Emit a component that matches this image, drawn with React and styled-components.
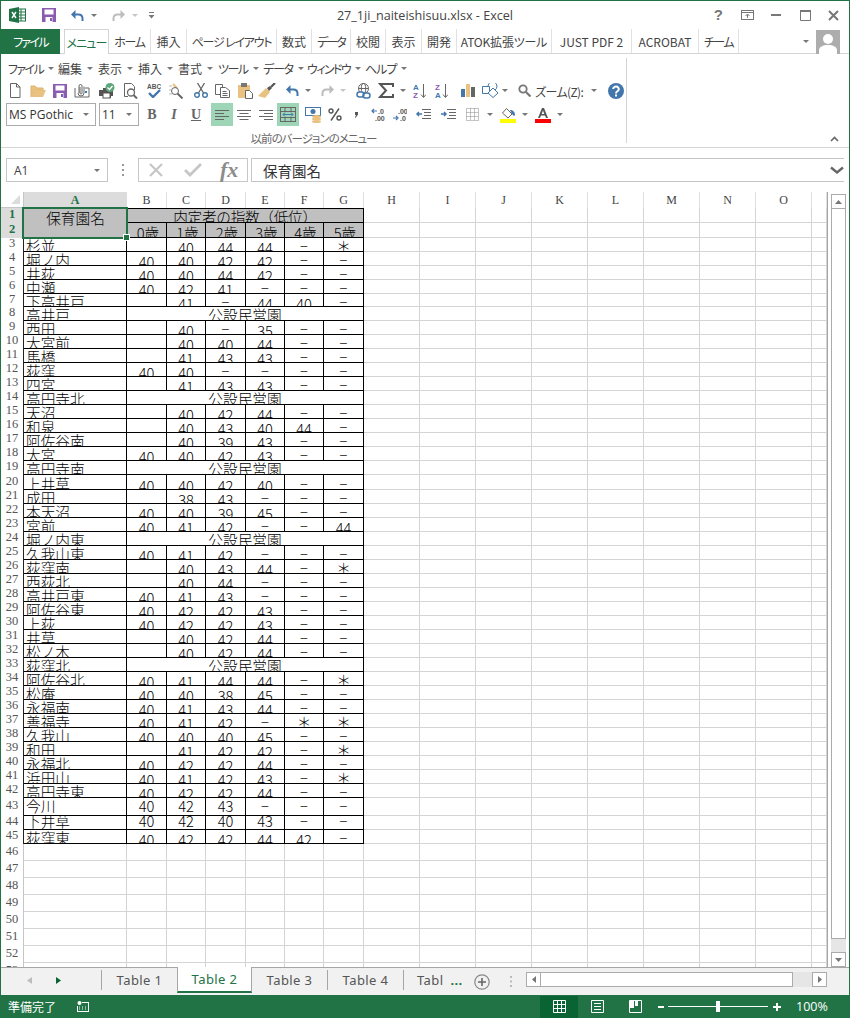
import styled, { createGlobalStyle } from "styled-components";

const GREEN = "#217346";
const JP = `"Noto Sans CJK JP", sans-serif`;

const GlobalStyle = createGlobalStyle`
  html, body { margin: 0; padding: 0; background: #fff; }
  svg { display: block; flex: none; }
`;

const Window = styled.div`
  width: 850px;
  height: 1018px;
  box-sizing: border-box;
  border: 1px solid ${GREEN};
  border-bottom: 0;
  display: flex;
  flex-direction: column;
  overflow: hidden;
  background: #fff;
  font-family: ${JP};
  font-feature-settings: "palt";
  color: #444;
`;

/* title bar */
const TitleBar = styled.div`
  height: 28px;
  flex: none;
  display: grid;
  grid-template-columns: 1fr auto 1fr;
  align-items: center;
`;
const Qat = styled.div`
  display: flex;
  align-items: center;
`;
const Title = styled.div`
  font-family: "Open Sans", sans-serif;
  font-size: 12.6px;
  color: #444;
`;
const WinControls = styled.div`
  display: flex;
  justify-content: flex-end;
  align-items: center;
  padding-right: 10px;
`;
const Help = styled.span`
  font-family: "Liberation Sans", sans-serif;
  font-weight: 700;
  font-size: 15px;
  color: #777;
  line-height: 16px;
  margin-right: 18px;
`;
const Slot = styled.div`
  width: ${(p) => p.$w}px;
  margin-left: ${(p) => p.$ml || 0}px;
  flex: none;
  display: flex;
  align-items: center;
  justify-content: center;
`;

/* ribbon tabs */
const TabRow = styled.div`
  height: 25px;
  flex: none;
  box-sizing: border-box;
  display: flex;
  align-items: stretch;
  border-bottom: 1px solid #d4d4d4;
  position: relative;
`;
const FileTab = styled.div`
  width: 59px;
  margin-right: 4px;
  background: ${GREEN};
  color: #fff;
  font-size: 12px;
  letter-spacing: -1.7px;
  display: flex;
  align-items: center;
  justify-content: center;
  margin-bottom: -1px;
`;
const RibbonTab = styled.div`
  width: ${(p) => p.$w}px;
  flex: none;
  box-sizing: border-box;
  font-size: 12px;
  letter-spacing: ${(p) => p.$ls || 0}px;
  display: flex;
  align-items: center;
  justify-content: center;
  white-space: nowrap;
  color: ${(p) => (p.$active ? GREEN : "#444")};
  border-right: 1px solid #e1e1e1;
  ${(p) =>
    p.$active &&
    `
    background: #fff;
    border: 1px solid #d4d4d4;
    border-bottom: 0;
    margin-bottom: -1px;
    position: relative;
  `}
`;
const TabTail = styled.div`
  flex: 1;
  display: flex;
  justify-content: flex-end;
  align-items: center;
  padding-right: 9px;
  gap: 7px;
  margin-bottom: -1px;
`;
const Avatar = styled.div`
  width: 24px;
  height: 24px;
  background: #adadad;
  overflow: hidden;
`;

/* ribbon body */
const Ribbon = styled.div`
  height: 94px;
  flex: none;
  box-sizing: border-box;
  border-bottom: 1px solid #d4d4d4;
  display: flex;
`;
const RibbonGroup = styled.div`
  width: 626px;
  margin: 4px 0 4px;
  box-sizing: border-box;
  border-right: 1px solid #d4d4d4;
  display: flex;
  flex-direction: column;
`;
const MenuRow = styled.div`
  height: 19px;
  margin-top: 1px;
  display: flex;
  align-items: center;
  padding-left: 7px;
`;
const MenuItem = styled.div`
  width: ${(p) => p.$w}px;
  flex: none;
  display: flex;
  align-items: center;
  font-size: 12px;
  color: #444;
  white-space: nowrap;
`;
const MenuText = styled.span`
  letter-spacing: ${(p) => p.$ls || 0}px;
  margin-right: 5px;
`;
const ToolRow = styled.div`
  height: ${(p) => p.$h}px;
  flex: none;
  display: flex;
  align-items: center;
`;
const Caret = styled.span`
  display: block;
  flex: none;
  width: 0;
  height: 0;
  margin-left: ${(p) => p.$ml || 0}px;
  border-left: 3px solid transparent;
  border-right: 3px solid transparent;
  border-top: 3px solid ${(p) => p.$color || "#777"};
`;
const Select = styled.div`
  width: ${(p) => p.$w}px;
  height: 23px;
  margin-left: ${(p) => p.$ml}px;
  flex: none;
  box-sizing: border-box;
  border: 1px solid #ababab;
  display: flex;
  align-items: center;
  justify-content: space-between;
  padding: 0 6px 0 2px;
  font-family: "Open Sans", sans-serif;
  font-size: 12px;
  color: #333;
`;
const StyleBtn = styled.div`
  width: ${(p) => p.$w}px;
  margin-left: ${(p) => p.$ml || 0}px;
  flex: none;
  text-align: center;
  font-family: "Liberation Serif", serif;
  font-size: 14px;
  font-weight: 700;
  color: #666;
  font-style: ${(p) => (p.$italic ? "italic" : "normal")};
  text-decoration: ${(p) => (p.$under ? "underline" : "none")};
`;
const HiBtn = styled.div`
  width: 22px;
  height: 23px;
  margin-left: ${(p) => p.$ml || 0}px;
  flex: none;
  background: ${(p) => (p.$on ? "#9fd5b7" : "transparent")};
  display: flex;
  align-items: center;
  justify-content: center;
`;
const ZoomLabel = styled.span`
  font-size: 12px;
  color: #444;
  margin-left: 4px;
  padding-top: 2px;
  width: 54px;
  flex: none;
  letter-spacing: -0.6px;
  white-space: nowrap;
`;
const GroupLabel = styled.div`
  margin-top: auto;
  height: 16px;
  line-height: 16px;
  text-align: center;
  font-size: 11.5px;
  letter-spacing: -1px;
  color: #666;
  margin-bottom: -3px;
`;
const Collapse = styled.div`
  flex: 1;
  display: flex;
  justify-content: flex-end;
  align-items: flex-end;
  padding: 0 10px 5px 0;
`;

/* formula bar */
const FormulaBar = styled.div`
  height: 44px;
  flex: none;
  box-sizing: border-box;
  padding: 10px 5px 10px 5px;
  display: flex;
  align-items: stretch;
`;
const NameBox = styled.div`
  width: 102px;
  flex: none;
  box-sizing: border-box;
  border: 1px solid #c6c6c6;
  display: flex;
  align-items: center;
  justify-content: space-between;
  padding: 0 7px 0 7px;
  font-family: "Open Sans", sans-serif;
  font-size: 12px;
  color: #444;
`;
const GripDots = styled.div`
  width: 30px;
  flex: none;
  display: flex;
  align-items: center;
  justify-content: center;
`;
const FxBox = styled.div`
  width: 110px;
  flex: none;
  box-sizing: border-box;
  border: 1px solid #c6c6c6;
  display: flex;
  align-items: center;
  padding-left: 9px;
`;
const FxText = styled.span`
  font-family: "Liberation Serif", serif;
  font-style: italic;
  font-weight: 700;
  font-size: 22px;
  line-height: 22px;
  color: #8c8c8c;
  margin-left: 18px;
`;
const FormulaInput = styled.div`
  flex: 1;
  margin-left: 3px;
  box-sizing: border-box;
  border: 1px solid #c6c6c6;
  border-right: 0;
  display: flex;
  align-items: center;
  justify-content: space-between;
  padding: 0 0 0 11px;
  font-size: 14.5px;
  color: #333;
  font-feature-settings: normal;
`;

/* sheet */
const SheetArea = styled.div`
  height: 776px;
  flex: none;
  display: flex;
  box-sizing: border-box;
  border-bottom: 1px solid #a6a6a6;
`;
const Sheet = styled.div`
  width: 827px;
  flex: none;
  box-sizing: border-box;
  border-right: 1px solid #a6a6a6;
  overflow: hidden;
  display: grid;
  grid-template-columns: 23px 103px 40px 39px 40px 39px 39px 40px repeat(8, 56px) 15px;
  grid-template-rows: ${(p) => p.$rows};
  align-content: start;
`;
const Corner = styled.div`
  border-right: 1px solid #c6c6c6;
  border-bottom: 1px solid #c6c6c6;
  display: flex;
  align-items: flex-end;
  justify-content: flex-end;
  padding: 0 3px 3px 0;
`;
const ColHeader = styled.div`
  font-family: "Liberation Serif", serif;
  font-size: 12px;
  font-weight: ${(p) => (p.$active ? 700 : 400)};
  line-height: 16px;
  text-align: center;
  color: ${(p) => (p.$active ? GREEN : "#444")};
  background: ${(p) => (p.$active ? "#dcdcdc" : "#fff")};
  border-right: 1px solid ${(p) => (p.$active ? "#dcdcdc" : "#e0e0e0")};
  overflow: hidden;
`;
const RowHeader = styled.div`
  font-family: "Liberation Serif", serif;
  font-size: 12.5px;
  font-weight: ${(p) => (p.$active ? 700 : 400)};
  text-align: center;
  color: ${(p) => (p.$active ? GREEN : "#555")};
  background: ${(p) => (p.$active ? "#dcdcdc" : "#fff")};
  border-right: 1px solid ${(p) => (p.$boxed ? "#222" : "#c6c6c6")};
  overflow: hidden;
  display: flex;
  align-items: center;
  justify-content: center;
  padding-bottom: ${(p) => (p.$boxed ? 3 : 2)}px;
  box-sizing: border-box;
`;
const DataCell = styled.div`
  box-sizing: border-box;
  min-width: 0;
  min-height: 0;
  overflow: hidden;
  border-right: 1px solid #000;
  border-bottom: 1px solid #000;
  border-top: ${(p) => (p.$top ? "1px solid #000" : "0")};
  grid-column: ${(p) => (p.$span ? `span ${p.$span}` : "auto")};
  background: ${(p) => (p.$head ? "#c0c0c0" : "#fff")};
  color: #000;
  font-size: 14.67px;
  font-weight: 300;
  line-height: ${(p) => p.$lh || 16}px;
  letter-spacing: ${(p) => p.$ls || 0}px;
  white-space: nowrap;
  font-feature-settings: normal;
  text-align: ${(p) => (p.$left ? "left" : "center")};
  padding: ${(p) => p.$pad}px 0 0 ${(p) => (p.$left ? 2 : p.$indent || 0)}px;
`;
const EmptyCell = styled.div`
  border-right: 1px solid #d4d4d4;
  border-bottom: 1px solid #d4d4d4;
`;
const SelectedCell = styled.div`
  grid-row: span 2;
  background: #c0c0c0;
  position: relative;
  color: #000;
  font-size: 14.67px;
  font-weight: 300;
  line-height: 16px;
  text-align: center;
  padding-top: 2px;
  font-feature-settings: normal;
`;
const Selection = styled.div`
  position: absolute;
  left: -2px;
  top: -1px;
  right: -1px;
  bottom: -1px;
  border: 2px solid ${GREEN};
  pointer-events: none;
`;
const Handle = styled.div`
  position: absolute;
  right: -4px;
  bottom: -4px;
  width: 5px;
  height: 5px;
  background: ${GREEN};
  border: 1px solid #fff;
`;

/* vertical scrollbar */
const VScroll = styled.div`
  flex: 1;
  padding: 2px 3px 0 3px;
  display: flex;
  flex-direction: column;
`;
const ScrollBtn = styled.div`
  height: 15px;
  width: 15px;
  box-sizing: border-box;
  border: 1px solid #ababab;
  flex: none;
  display: flex;
  align-items: center;
  justify-content: center;
  background: #fff;
`;
const VThumb = styled.div`
  height: 730px;
  box-sizing: border-box;
  border: 1px solid #ababab;
  border-top: 0;
  background: #fff;
  flex: none;
`;
const VTrack = styled.div`
  flex: 1;
  background: #e6e6e6;
`;

/* sheet tabs */
const TabStrip = styled.div`
  height: 27px;
  flex: none;
  background: #f1f1f1;
  display: flex;
  align-items: stretch;
`;
const Nav = styled.div`
  width: 100px;
  flex: none;
  display: flex;
  align-items: center;
  padding: 0 0 2px 26px;
  gap: 24px;
  box-sizing: border-box;
`;
const SheetTab = styled.div`
  width: 75px;
  flex: none;
  box-sizing: border-box;
  display: flex;
  align-items: center;
  justify-content: center;
  padding-bottom: 3px;
  font-family: "Noto Sans", sans-serif;
  font-size: 13px;
  letter-spacing: 0.4px;
  color: ${(p) => (p.$active ? GREEN : "#555")};
  white-space: nowrap;
  ${(p) =>
    p.$active
      ? `background:#fff;border-left:1px solid #a6a6a6;border-right:1px solid #a6a6a6;border-bottom:2px solid ${GREEN};margin-top:-1px;height:26px;padding-bottom:0;`
      : ``}
`;
const TabSep = styled.span`
  width: 1px;
  height: 20px;
  align-self: center;
  background: #a6a6a6;
  flex: none;
  margin-top: -4px;
`;
const CutTab = styled.div`
  width: 58px;
  flex: none;
  display: flex;
  align-items: center;
  padding: 0 0 3px 13px;
  box-sizing: border-box;
  font-family: "Noto Sans", sans-serif;
  font-size: 13px;
  letter-spacing: 0.4px;
  color: #555;
  overflow: hidden;
  white-space: nowrap;
`;
const More = styled.span`
  color: ${GREEN};
  font-weight: 700;
  margin-left: 7px;
`;
const HScroll = styled.div`
  width: 301px;
  height: 15px;
  flex: none;
  align-self: center;
  margin: -5px 0 0 14px;
  display: flex;
  box-sizing: border-box;
  background: #e6e6e6;
`;
const HThumb = styled.div`
  width: 252px;
  box-sizing: border-box;
  background: #fff;
  border: 1px solid #ababab;
  border-left: 0;
`;
const HTrack = styled.div`
  flex: 1;
`;

/* status bar */
const StatusBar = styled.div`
  height: 23px;
  flex: none;
  margin: 0 -1px;
  background: ${GREEN};
  color: #fff;
  display: flex;
  align-items: center;
  font-size: 12px;
  padding-left: 8px;
`;
const ViewBtn = styled.div`
  width: 38px;
  height: 22px;
  flex: none;
  display: flex;
  align-items: center;
  justify-content: center;
  background: ${(p) => (p.$on ? "#0a6332" : "transparent")};
`;
const ZoomBar = styled.div`
  width: 100px;
  height: 1px;
  background: #fff;
  margin: 0 4px;
  position: relative;
  flex: none;
`;
const ZoomThumb = styled.div`
  position: absolute;
  left: 48px;
  top: -5px;
  width: 4px;
  height: 11px;
  background: #fff;
`;
const Percent = styled.span`
  font-family: "Open Sans", sans-serif;
  font-size: 12.5px;
  margin-left: 15px;
`;

/* icons */
const Ic = ({ w = 16, h = 16, children }) => (
  <svg width={w} height={h} viewBox={`0 0 ${w} ${h}`} fill="none">
    {children}
  </svg>
);
const BLUE = "#4377ac";
const GOLD = "#e9c282";
const PURPLE = "#8a5bb0";
const GREY = "#666";

const ExcelLogo = () => (
  <Ic w={17} h={16}>
    <rect x="8" y="2" width="8.5" height="12" fill="#fff" stroke={GREEN} />
    <path d="M8 5h8M8 8h8M8 11h8M12 2v12" stroke={GREEN} />
    <path d="M0 2 10 0v16L0 14z" fill={GREEN} />
    <path d="M3 5l4 6M7 5l-4 6" stroke="#fff" strokeWidth="1.4" />
  </Ic>
);
const SaveIc = ({ w = 14 }) => (
  <Ic w={w} h={14}>
    <rect width={w} height="14" fill={PURPLE} />
    <rect x="2.5" y="1.5" width={w - 5} height="5" fill="#fff" />
    <rect x="3.5" y="9" width={w - 7} height="5" fill="#fff" />
    <rect x={w - 6} y="10" width="2" height="3" fill={PURPLE} />
  </Ic>
);
const UndoIc = ({ color = BLUE }) => (
  <Ic w={15} h={13}>
    <path d="M1 5.5 5.5 1v9z" fill={color} />
    <path d="M5 5.5h3.5a4 4 0 0 1 4 3.5v3" stroke={color} strokeWidth="2" />
  </Ic>
);
const RedoIc = ({ color = "#bdbdbd" }) => (
  <Ic w={15} h={13}>
    <path d="M14 5.5 9.5 1v9z" fill={color} />
    <path d="M10 5.5H6.5a4 4 0 0 0-4 3.5v3" stroke={color} strokeWidth="2" />
  </Ic>
);
const CustomizeIc = () => (
  <Ic w={7} h={8}>
    <path d="M1 1.5h5" stroke="#777" />
    <path d="M.5 4h6L3.5 7.5z" fill="#777" />
  </Ic>
);
const NewIc = () => (
  <Ic w={14} h={15}>
    <path d="M2.5.5h6l3.5 3.5v10.5H2.500z" fill="#fff" stroke={GREY} />
    <path d="M8.500.5V4H12" stroke={GREY} />
  </Ic>
);
const FolderIc = () => (
  <Ic w={16} h={14}>
    <path d="M1 13V2h4l2 2h6v2H4z" fill={GOLD} stroke="#ddb36d" />
    <path d="M1 13 4 6h12l-3 7z" fill={GOLD} />
  </Ic>
);
const AttachIc = () => (
  <Ic w={16} h={15}>
    <path d="M1 5v9h14V5h-4" stroke={GREY} />
    <path d="M5 10V3a1.500 1.500 0 0 1 3 0v7a1 1 0 0 1-2 0V4M10 3.500v6.500a3 3 0 0 1-6 0" stroke={GREY} />
    <rect x="11" y="8" width="2" height="2" fill={BLUE} />
  </Ic>
);
const PrintOkIc = () => (
  <Ic w={17} h={16}>
    <path d="M3 7h2v-2h7v2h3v6h-2v2H5v-2H1V7z" fill="#555" />
    <rect x="5" y="10" width="7" height="5" fill="#fff" stroke="#555" />
    <circle cx="12" cy="4.500" r="4.500" fill="#5ea67c" />
    <path d="M9.500 4.500l2 2 3-3.500" stroke="#fff" strokeWidth="1.300" />
  </Ic>
);
const PreviewIc = () => (
  <Ic w={15} h={16}>
    <path d="M1.500.5h7l3 3V7M1.500.5v13H5" stroke={GREY} />
    <circle cx="8" cy="9.500" r="3.500" stroke={GREY} strokeWidth="1.300" fill="#fff" />
    <path d="M10.500 12l3.500 3.500" stroke={GREY} strokeWidth="2" />
  </Ic>
);
const SpellIc = () => (
  <Ic w={14} h={15}>
    <text x="0" y="6" fontFamily="Liberation Sans" fontSize="6.500" fontWeight="700" fill="#555">ABC</text>
    <path d="M2 10l4 4 7-7" stroke={BLUE} strokeWidth="2.400" />
  </Ic>
);
const ResearchIc = () => (
  <Ic w={16} h={16}>
    <path d="M1 3h3M1 7h2M1 11h3" stroke="#bbb" />
    <path d="M5 1l4 4" stroke={GOLD} strokeWidth="2" />
    <circle cx="7" cy="8" r="3.500" stroke={GREY} />
    <path d="M9.500 10.500l5 5" stroke={GREY} strokeWidth="2" />
  </Ic>
);
const CutIc = () => (
  <Ic w={14} h={15}>
    <path d="M3.500 0 9.500 10M10.500 0 4.500 10" stroke={GREY} strokeWidth="1.300" />
    <circle cx="3" cy="12" r="2.300" stroke={BLUE} strokeWidth="1.400" />
    <circle cx="11" cy="12" r="2.300" stroke={BLUE} strokeWidth="1.400" />
  </Ic>
);
const CopyIc = () => (
  <Ic w={15} h={14}>
    <path d="M.5.5h7v10h-7z" fill="#fff" stroke={GREY} />
    <path d="M5.500 3.500h5l4 3v7h-9z" fill="#fff" stroke={GREY} />
    <path d="M7.500 7.500h4M7.500 9.500h5M7.500 11.500h5" stroke={GREY} />
  </Ic>
);
const PasteIc = () => (
  <Ic w={15} h={16}>
    <rect y="2" width="12" height="13" fill={GOLD} />
    <rect x="3" width="6" height="4" fill="#777" />
    <path d="M7.500 7.500h4l3 3v5h-7z" fill="#fff" stroke={GREY} />
  </Ic>
);
const BrushIc = () => (
  <Ic w={18} h={16}>
    <path d="M0 13 8 5l4 4-5 6z" fill={GOLD} />
    <path d="M9 5l3-2 2 2-3 3" fill="#555" />
    <path d="M13 4l4-4" stroke="#555" strokeWidth="2.200" />
  </Ic>
);
const LinkIc = () => (
  <Ic w={15} h={16}>
    <circle cx="7.500" cy="5.500" r="5" stroke={GREY} />
    <ellipse cx="7.500" cy="5.500" rx="2.200" ry="5" stroke={GREY} />
    <path d="M2.500 5.500h10" stroke={GREY} />
    <rect x="1" y="9" width="7" height="5" rx="2.500" fill="#fff" stroke={BLUE} strokeWidth="1.500" />
    <rect x="7" y="10" width="7" height="5" rx="2.500" stroke={BLUE} strokeWidth="1.500" />
  </Ic>
);
const SigmaIc = () => (
  <Ic w={16} h={15}>
    <path d="M15 4V1H2l6 6.500L2 14h13v-3" stroke="#555" strokeWidth="2" />
  </Ic>
);
const SortIc = ({ top, bottom, tc, bc }) => (
  <Ic w={13} h={16}>
    <text x="0" y="7" fontFamily="Liberation Sans" fontSize="8" fontWeight="700" fill={tc}>{top}</text>
    <text x="0" y="15" fontFamily="Liberation Sans" fontSize="8" fontWeight="700" fill={bc}>{bottom}</text>
    <path d="M10.500 1v13M8 11.500l2.500 3 2.500-3" stroke={GREY} />
  </Ic>
);
const ChartIc = () => (
  <Ic w={14} h={13}>
    <rect y="5" width="4" height="8" fill={BLUE} />
    <rect x="5" width="4" height="13" fill={GOLD} />
    <rect x="10" y="3" width="4" height="10" fill={GREY} />
  </Ic>
);
const ShapeIc = () => (
  <Ic w={17} h={15}>
    <path d="M.5 3.500h7v7h-7z" stroke={BLUE} />
    <path d="M6 3a4.500 4.500 0 1 1 7 4" stroke={BLUE} />
    <path d="M11 5l5 5-5 4.500L6 10z" fill="#fff" stroke={BLUE} />
  </Ic>
);
const SearchIc = () => (
  <Ic w={13} h={13}>
    <circle cx="5" cy="5" r="3.700" stroke="#777" strokeWidth="1.800" />
    <path d="M8 8l4.500 4.500" stroke="#777" strokeWidth="2.200" />
  </Ic>
);
const HelpIc = () => (
  <Ic w={16} h={16}>
    <circle cx="8" cy="8" r="8" fill={BLUE} />
    <path d="M5.200 6a2.800 2.500 0 1 1 4.500 2c-1 .7-1.700 1.200-1.700 2.500" stroke="#fff" strokeWidth="2" />
    <rect x="7" y="11.500" width="2" height="2" fill="#fff" />
  </Ic>
);
const AlignIc = ({ mode }) => {
  const lines = [0, 1, 2, 3].map((i) => {
    const long = i % 2 === 0;
    const len = long ? 14 : 9;
    const x = mode === "left" ? 0 : mode === "right" ? 14 - len : (14 - len) / 2;
    return <path key={i} d={`M${x} ${1.5 + i * 3}h${len}`} stroke={GREY} />;
  });
  return <Ic w={14} h={12}>{lines}</Ic>;
};
const MergeIc = () => (
  <Ic w={16} h={15}>
    <rect x=".5" y=".5" width="15" height="14" stroke={GREY} fill="none" />
    <path d="M.5 4.500h15M.5 10.500h15M5 .5v4M11 .5v4M5 10.500v4M11 10.500v4" stroke={GREY} />
    <path d="M3 7.500h10M3 7.500l2-2M3 7.500l2 2M13 7.500l-2-2M13 7.500l-2 2" stroke={BLUE} />
  </Ic>
);
const CurrencyIc = () => (
  <Ic w={17} h={16}>
    <rect x=".5" y=".5" width="15" height="8" fill="#fff" stroke={BLUE} />
    <circle cx="8" cy="4.500" r="2.500" fill={BLUE} />
    <ellipse cx="11.500" cy="9.500" rx="4.500" ry="1.500" fill={GOLD} />
    <ellipse cx="11.500" cy="12" rx="4.500" ry="1.500" fill={GOLD} />
    <ellipse cx="11.500" cy="14.500" rx="4.500" ry="1.500" fill={GOLD} />
  </Ic>
);
const PercentIc = () => (
  <Ic w={14} h={13}>
    <circle cx="3" cy="3" r="2" stroke="#555" strokeWidth="1.400" />
    <circle cx="11" cy="10" r="2" stroke="#555" strokeWidth="1.400" />
    <path d="M11 .5 3 12.500" stroke="#555" strokeWidth="1.400" />
  </Ic>
);
const CommaIc = () => (
  <Ic w={4} h={6}>
    <path d="M1 0h3v2.500L1.500 6 1 5.500 2 3H1z" fill="#555" />
  </Ic>
);
const DecIc = ({ flip }) => (
  <Ic w={14} h={14}>
    <text x={flip ? 5 : 7} y="6" fontFamily="Liberation Sans" fontSize="7" fontWeight="700" fill="#555">{flip ? ".00" : ".0"}</text>
    <text x={flip ? 7 : 4} y="13" fontFamily="Liberation Sans" fontSize="7" fontWeight="700" fill="#555">{flip ? ".0" : ".00"}</text>
    {flip ? (
      <path d="M0 10h4M3 8l2 2-2 2" stroke={BLUE} strokeWidth="1.200" />
    ) : (
      <path d="M6 3H1M3 1 1 3l2 2" stroke={BLUE} strokeWidth="1.200" />
    )}
  </Ic>
);
const IndentIc = ({ out }) => (
  <Ic w={16} h={11}>
    <path d="M7 .5h9M9 3.500h7M9 6.500h7M7 9.500h9" stroke={GREY} />
    <path d={out ? "M7 5H2M4 3 2 5l2 2" : "M1 5h5M4 3l2 2-2 2"} stroke={BLUE} strokeWidth="1.500" />
  </Ic>
);
const BordersIc = () => (
  <Ic w={13} h={13}>
    <path d="M.5.500h12v12H.500zM.5 4.500h12M.5 8.500h12M4.500.5v12M8.500.5v12" stroke="#888" strokeDasharray="1 1" />
  </Ic>
);
const FillIc = () => (
  <Ic w={16} h={16}>
    <path d="M6.500 1.500 12 7l-4 4-5.500-5z" fill="#fff" stroke={GREY} />
    <path d="M10 3c3 0 5 2 5 5l-1 1-2-2z" fill={BLUE} />
    <rect y="12" width="16" height="4" fill="#ffff00" />
  </Ic>
);
const FontColorIc = () => (
  <Ic w={16} h={16}>
    <path d="M3 11 7 1h2l4 10h-2L10 8.500H6L5 11zM6.700 7h2.600L8 3.500z" fill="#555" />
    <rect y="12" width="16" height="4" fill="#ff0000" />
  </Ic>
);
const ChevronUp = () => (
  <Ic w={9} h={6}>
    <path d="M1 5 4.500 1.500 8 5" stroke="#666" strokeWidth="1.600" />
  </Ic>
);

/* toolbar data: [kind, width, margin before] */
const Row2 = [
  [NewIc, 14, 7], [FolderIc, 16, 8], [SaveIc, 14, 7], [AttachIc, 16, 7], [PrintOkIc, 17, 8],
  [PreviewIc, 15, 8], [SpellIc, 14, 9], [ResearchIc, 16, 7], [CutIc, 14, 10], [CopyIc, 15, 7],
  [PasteIc, 15, 8], [BrushIc, 18, 5], [UndoIc, 15, 9],
];

const MENU = [
  ["ファイル", 50, -1.6], ["編集", 40], ["表示", 40], ["挿入", 40], ["書式", 40],
  ["ツール", 45, -1.5], ["データ", 44, -1.2], ["ウィンドウ", 58, -1.6], ["ヘルプ", 44, -1],
];
const TABS = [
  ["メニュー", 45, true, -0.8], ["ホーム", 42, false, -1.3], ["挿入", 36], ["ページ レイアウト", 90, false, -1.2],
  ["数式", 35], ["データ", 39, false, -2], ["校閲", 35], ["表示", 36], ["開発", 35],
  ["ATOK拡張ツール", 95, false, -0.2], ["JUST PDF 2", 80], ["ACROBAT", 67], ["チーム", 40, false, -1.5],
];

const PUB = "公設民営園";
const D = "−";
const S = "＊";
const ROWS = [
  ["杉並", "", 40, 44, 44, D, S],
  ["堀ノ内", 40, 40, 42, 42, D, D],
  ["井荻", 40, 40, 44, 42, D, D],
  ["中瀬", 40, 42, 41, D, D, D],
  ["下高井戸", "", 41, D, 44, 40, D],
  ["高井戸", PUB],
  ["西田", "", 40, D, 35, D, D],
  ["大宮前", "", 40, 40, 44, D, D],
  ["馬橋", "", 41, 43, 43, D, D],
  ["荻窪", 40, 40, D, D, D, D],
  ["四宮", "", 41, 43, 43, D, D],
  ["高円寺北", PUB],
  ["天沼", "", 40, 42, 44, D, D],
  ["和泉", "", 40, 43, 40, 44, D],
  ["阿佐谷南", "", 40, 39, 43, D, D],
  ["大宮", 40, 40, 42, 43, D, D],
  ["高円寺南", PUB],
  ["上井草", 40, 40, 42, 40, D, D],
  ["成田", "", 38, 43, D, D, D],
  ["本天沼", 40, 40, 39, 45, D, D],
  ["宮前", 40, 41, 42, D, D, 44],
  ["堀ノ内東", PUB],
  ["久我山東", 40, 41, 42, D, D, D],
  ["荻窪南", "", 40, 43, 44, D, S],
  ["西荻北", "", 40, 44, D, D, D],
  ["高井戸東", 40, 41, 43, D, D, D],
  ["阿佐谷東", 40, 42, 42, 43, D, D],
  ["上荻", 40, 42, 42, 43, D, D],
  ["井草", "", 40, 42, 44, D, D],
  ["松ノ木", "", 40, 42, 44, D, D],
  ["荻窪北", PUB],
  ["阿佐谷北", 40, 41, 44, 44, D, S],
  ["松庵", 40, 40, 38, 45, D, D],
  ["永福南", 40, 41, 43, 44, D, D],
  ["善福寺", 40, 41, 42, D, S, S],
  ["久我山", 40, 40, 40, 45, D, D],
  ["和田", "", 41, 42, 42, D, S],
  ["永福北", 40, 42, 42, 44, D, D],
  ["浜田山", 40, 41, 42, 43, D, S],
  ["高円寺東", 40, 42, 42, 44, D, D],
  ["今川", 40, 42, 43, D, D, D],
  ["下井草", 40, 42, 40, 43, D, D],
  ["荻窪東", 40, 42, 42, 44, 42, D],
];

const COLS = "ABCDEFGHIJKLMNOP".split("");
const rowHeight = (n) => {
  if (n <= 2) return 15;
  if (n === 7) return 13;
  if (n === 20) return 15;
  if (n === 43) return 18;
  if (n >= 46) return 17;
  return 14;
};
const TRACKS = ["16px"];
for (let n = 1; n <= 53; n++) TRACKS.push(`${rowHeight(n)}px`);

const valuePad = (n, v) => {
  if (n === 43 || n === 44) return 0;
  if (v === D || v === S) return n === 20 ? 1 : 0;
  return n === 20 ? 3 : 2;
};
const rowLine = (n) => (n === 44 ? 10 : undefined);

const Empties = ({ n, row }) =>
  Array.from({ length: n }, (_, i) => <EmptyCell key={`${row}-${i}`} />);

function SheetGrid() {
  return (
    <Sheet $rows={TRACKS.join(" ")}>
      <Corner>
        <svg width="9" height="9" viewBox="0 0 9 9">
          <path d="M9 0v9H0z" fill="#dcdcdc" />
        </svg>
      </Corner>
      {COLS.map((c) => (
        <ColHeader key={c} $active={c === "A"}>
          {c === "P" ? "" : c}
        </ColHeader>
      ))}

      <RowHeader $active $boxed>1</RowHeader>
      <SelectedCell>
        保育園名
        <Selection>
          <Handle />
        </Selection>
      </SelectedCell>
      <DataCell $head $top $span={6} $pad={0} $ls={-0.3}>内定者の指数（低位）</DataCell>
      <Empties n={9} row={1} />

      <RowHeader $active $boxed>2</RowHeader>
      {[0, 1, 2, 3, 4, 5].map((a) => (
        <DataCell key={a} $head $pad={2} $indent={3}>{a}歳</DataCell>
      ))}
      <Empties n={9} row={2} />

      {ROWS.map((r, i) => {
        const n = i + 3;
        const fragments = [
          <RowHeader key="h" $boxed>{n}</RowHeader>,
          <DataCell key="a" $left $pad={n === 20 ? 1 : 0} $lh={rowLine(n)}>{r[0]}</DataCell>,
        ];
        if (r.length === 2) {
          fragments.push(<DataCell key="m" $span={6} $pad={0}>{r[1]}</DataCell>);
        } else {
          r.slice(1).forEach((v, j) =>
            fragments.push(
              <DataCell key={j} $pad={valuePad(n, v)} $lh={rowLine(n)}>{v}</DataCell>
            )
          );
        }
        return [...fragments, <Empties key="e" n={9} row={n} />];
      })}

      {Array.from({ length: 8 }, (_, i) => i + 46).map((n) => [
        <RowHeader key={`h${n}`}>{n}</RowHeader>,
        <Empties key={`e${n}`} n={16} row={n} />,
      ])}
    </Sheet>
  );
}

export default function App() {
  return (
    <>
      <GlobalStyle />
      <Window>
        <TitleBar>
          <Qat>
            <Slot $w={17} $ml={8}><ExcelLogo /></Slot>
            <Slot $w={14} $ml={16}><SaveIc /></Slot>
            <Slot $w={15} $ml={14}><UndoIc /></Slot>
            <Caret $ml={6} />
            <Slot $w={15} $ml={14}><RedoIc /></Slot>
            <Caret $ml={6} $color="#c6c6c6" />
            <Slot $w={7} $ml={10}><CustomizeIc /></Slot>
          </Qat>
          <Title>27_1ji_naiteishisuu.xlsx - Excel</Title>
          <WinControls>
            <Help>?</Help>
            <Slot $w={13} $ml={0}>
              <Ic w={13} h={10}>
                <rect x=".5" y=".5" width="12" height="9" stroke="#777" />
                <path d="M.5 2.500h12M6.500 8V4.500M4.500 6l2-2 2 2" stroke="#777" />
              </Ic>
            </Slot>
            <Slot $w={10} $ml={17}>
              <Ic w={10} h={3}><rect y="0" width="10" height="2" fill="#777" /></Ic>
            </Slot>
            <Slot $w={11} $ml={19}>
              <Ic w={11} h={11}><path d="M.5 1.500h10v9H.500z" stroke="#777" /><path d="M0 1h11" stroke="#777" strokeWidth="2" /></Ic>
            </Slot>
            <Slot $w={11} $ml={17}>
              <Ic w={11} h={11}><path d="M1 1l9 9M10 1l-9 9" stroke="#777" strokeWidth="2" /></Ic>
            </Slot>
          </WinControls>
        </TitleBar>

        <TabRow>
          <FileTab>ファイル</FileTab>
          {TABS.map(([label, w, active, ls]) => (
            <RibbonTab key={label} $w={w} $active={active} $ls={ls}>{label}</RibbonTab>
          ))}
          <TabTail>
            <Caret />
            <Avatar>
              <svg width="24" height="24" viewBox="0 0 24 24">
                <circle cx="12" cy="9" r="5" fill="#fff" />
                <path d="M3 24v-4c0-3 4-5 9-5s9 2 9 5v4z" fill="#fff" />
              </svg>
            </Avatar>
          </TabTail>
        </TabRow>

        <Ribbon>
          <RibbonGroup>
            <MenuRow>
              {MENU.map(([label, w, ls]) => (
                <MenuItem key={label} $w={w}><MenuText $ls={ls}>{label}</MenuText><Caret /></MenuItem>
              ))}
            </MenuRow>
            <ToolRow $h={25}>
              {Row2.map(([Icon, w, ml], i) => (
                <Slot key={i} $w={w} $ml={ml}><Icon /></Slot>
              ))}
              <Caret $ml={5} />
              <Slot $w={15} $ml={9}><RedoIc /></Slot>
              <Caret $ml={5} $color="#c6c6c6" />
              <Slot $w={15} $ml={10}><LinkIc /></Slot>
              <Slot $w={16} $ml={7}><SigmaIc /></Slot>
              <Caret $ml={6} />
              <Slot $w={13} $ml={7}><SortIc top="A" bottom="Z" tc={BLUE} bc={PURPLE} /></Slot>
              <Slot $w={13} $ml={9}><SortIc top="Z" bottom="A" tc={PURPLE} bc={BLUE} /></Slot>
              <Slot $w={14} $ml={13}><ChartIc /></Slot>
              <Slot $w={17} $ml={7}><ShapeIc /></Slot>
              <Caret $ml={3} />
              <Slot $w={13} $ml={10}><SearchIc /></Slot>
              <ZoomLabel>ズーム(Z):</ZoomLabel>
              <Caret $ml={2} />
              <Slot $w={16} $ml={11}><HelpIc /></Slot>
            </ToolRow>
            <ToolRow $h={23}>
              <Select $w={90} $ml={5}>MS PGothic<Caret /></Select>
              <Select $w={40} $ml={3}>11<Caret /></Select>
              <StyleBtn $w={22} $ml={2}>B</StyleBtn>
              <StyleBtn $w={22} $italic>I</StyleBtn>
              <StyleBtn $w={22} $under>U</StyleBtn>
              <HiBtn $on $ml={4}><AlignIc mode="left" /></HiBtn>
              <HiBtn><AlignIc mode="center" /></HiBtn>
              <HiBtn><AlignIc mode="right" /></HiBtn>
              <HiBtn $on><MergeIc /></HiBtn>
              <Slot $w={17} $ml={6}><CurrencyIc /></Slot>
              <Slot $w={14} $ml={6}><PercentIc /></Slot>
              <Slot $w={4} $ml={12}><CommaIc /></Slot>
              <Slot $w={14} $ml={13}><DecIc /></Slot>
              <Slot $w={14} $ml={8}><DecIc flip /></Slot>
              <Slot $w={16} $ml={8}><IndentIc out /></Slot>
              <Slot $w={16} $ml={9}><IndentIc /></Slot>
              <Slot $w={13} $ml={10}><BordersIc /></Slot>
              <Caret $ml={8} />
              <Slot $w={16} $ml={7}><FillIc /></Slot>
              <Caret $ml={6} />
              <Slot $w={16} $ml={7}><FontColorIc /></Slot>
              <Caret $ml={6} />
            </ToolRow>
            <GroupLabel>以前のバージョンのメニュー</GroupLabel>
          </RibbonGroup>
          <Collapse><ChevronUp /></Collapse>
        </Ribbon>

        <FormulaBar>
          <NameBox>A1<Caret $color="#777" /></NameBox>
          <GripDots>
            <svg width="2" height="12" viewBox="0 0 2 12">
              <path d="M0 0h2v2H0zM0 5h2v2H0zM0 10h2v2H0z" fill="#999" />
            </svg>
          </GripDots>
          <FxBox>
            <Ic w={16} h={16}><path d="M2 2l12 12M14 2 2 14" stroke="#c6c6c6" strokeWidth="2.200" /></Ic>
            <Slot $w={18} $ml={20}>
              <Ic w={18} h={14}><path d="M1 7l5 5L17 1" stroke="#c6c6c6" strokeWidth="2.800" /></Ic>
            </Slot>
            <FxText>fx</FxText>
          </FxBox>
          <FormulaInput>
            保育園名
            <Slot $w={14} $ml={0}>
              <Ic w={14} h={9}><path d="M1 1.500l6 5 6-5" stroke="#666" strokeWidth="2.400" /></Ic>
            </Slot>
          </FormulaInput>
        </FormulaBar>

        <SheetArea>
          <SheetGrid />
          <VScroll>
            <ScrollBtn>
              <Ic w={7} h={4}><path d="M3.500 0 7 4H0z" fill="#777" /></Ic>
            </ScrollBtn>
            <VThumb />
            <VTrack />
            <ScrollBtn>
              <Ic w={7} h={4}><path d="M0 0h7L3.500 4z" fill="#777" /></Ic>
            </ScrollBtn>
          </VScroll>
        </SheetArea>

        <TabStrip>
          <Nav>
            <Ic w={5} h={7}><path d="M5 0v7L0 3.500z" fill="#bdbdbd" /></Ic>
            <Ic w={5} h={7}><path d="M0 0v7l5-3.500z" fill="#0a6332" /></Ic>
          </Nav>
          <TabSep />
          <SheetTab>Table 1</SheetTab>
          <SheetTab $active>Table 2</SheetTab>
          <SheetTab>Table 3</SheetTab>
          <TabSep />
          <SheetTab>Table 4</SheetTab>
          <TabSep />
          <CutTab>Tabl<More>...</More></CutTab>
          <Slot $w={16} $ml={12}>
            <Ic w={16} h={16}>
              <circle cx="8" cy="8" r="7.200" stroke="#888" strokeWidth="1.200" />
              <path d="M4 8h8M8 4v8" stroke="#666" strokeWidth="1.600" />
            </Ic>
          </Slot>
          <Slot $w={2} $ml={20}>
            <svg width="2" height="11" viewBox="0 0 2 11">
              <path d="M0 0h2v2H0zM0 4.500h2v2H0zM0 9h2v2H0z" fill="#bbb" />
            </svg>
          </Slot>
          <HScroll>
            <ScrollBtn><Ic w={4} h={7}><path d="M4 0v7L0 3.500z" fill="#777" /></Ic></ScrollBtn>
            <HThumb />
            <HTrack />
            <ScrollBtn><Ic w={4} h={7}><path d="M0 0v7l4-3.500z" fill="#777" /></Ic></ScrollBtn>
          </HScroll>
        </TabStrip>

        <StatusBar>
          準備完了
          <Slot $w={12} $ml={21}>
            <Ic w={12} h={12}>
              <circle cx="2.500" cy="2" r="2" fill="#fff" />
              <path d="M5 1h7v10H0V5h1v5h10V2H5z" fill="#fff" />
              <path d="M2 6h1M5 6h1M8 6h1M2 8h1M5 8h1M8 8h1" stroke="#fff" />
            </Ic>
          </Slot>
          <Slot $w={451} />
          <ViewBtn $on>
            <Ic w={13} h={13}><path d="M.5.500h12v12H.500zM.5 4.500h12M.5 8.500h12M4.500.5v12M8.500.5v12" stroke="#fff" /></Ic>
          </ViewBtn>
          <ViewBtn>
            <Ic w={13} h={13}><path d="M.5.500h12v12H.500z" stroke="#fff" /><path d="M3 3.500h7M3 6.500h7M3 9.500h7" stroke="#fff" /></Ic>
          </ViewBtn>
          <ViewBtn>
            <Ic w={13} h={13}><path d="M.5.500h12v12H.500z" stroke="#fff" /><rect x="1" y="1" width="4" height="7" fill="#fff" /><rect x="6" y="1" width="3" height="5" fill="#fff" /></Ic>
          </ViewBtn>
          <Slot $w={6} $ml={4}><Ic w={6} h={2}><rect width="6" height="2" fill="#fff" /></Ic></Slot>
          <ZoomBar><ZoomThumb /></ZoomBar>
          <Slot $w={8} $ml={1}><Ic w={8} h={8}><path d="M0 3h8v2H0zM3 0h2v8H3z" fill="#fff" /></Ic></Slot>
          <Percent>100%</Percent>
        </StatusBar>
      </Window>
    </>
  );
}
